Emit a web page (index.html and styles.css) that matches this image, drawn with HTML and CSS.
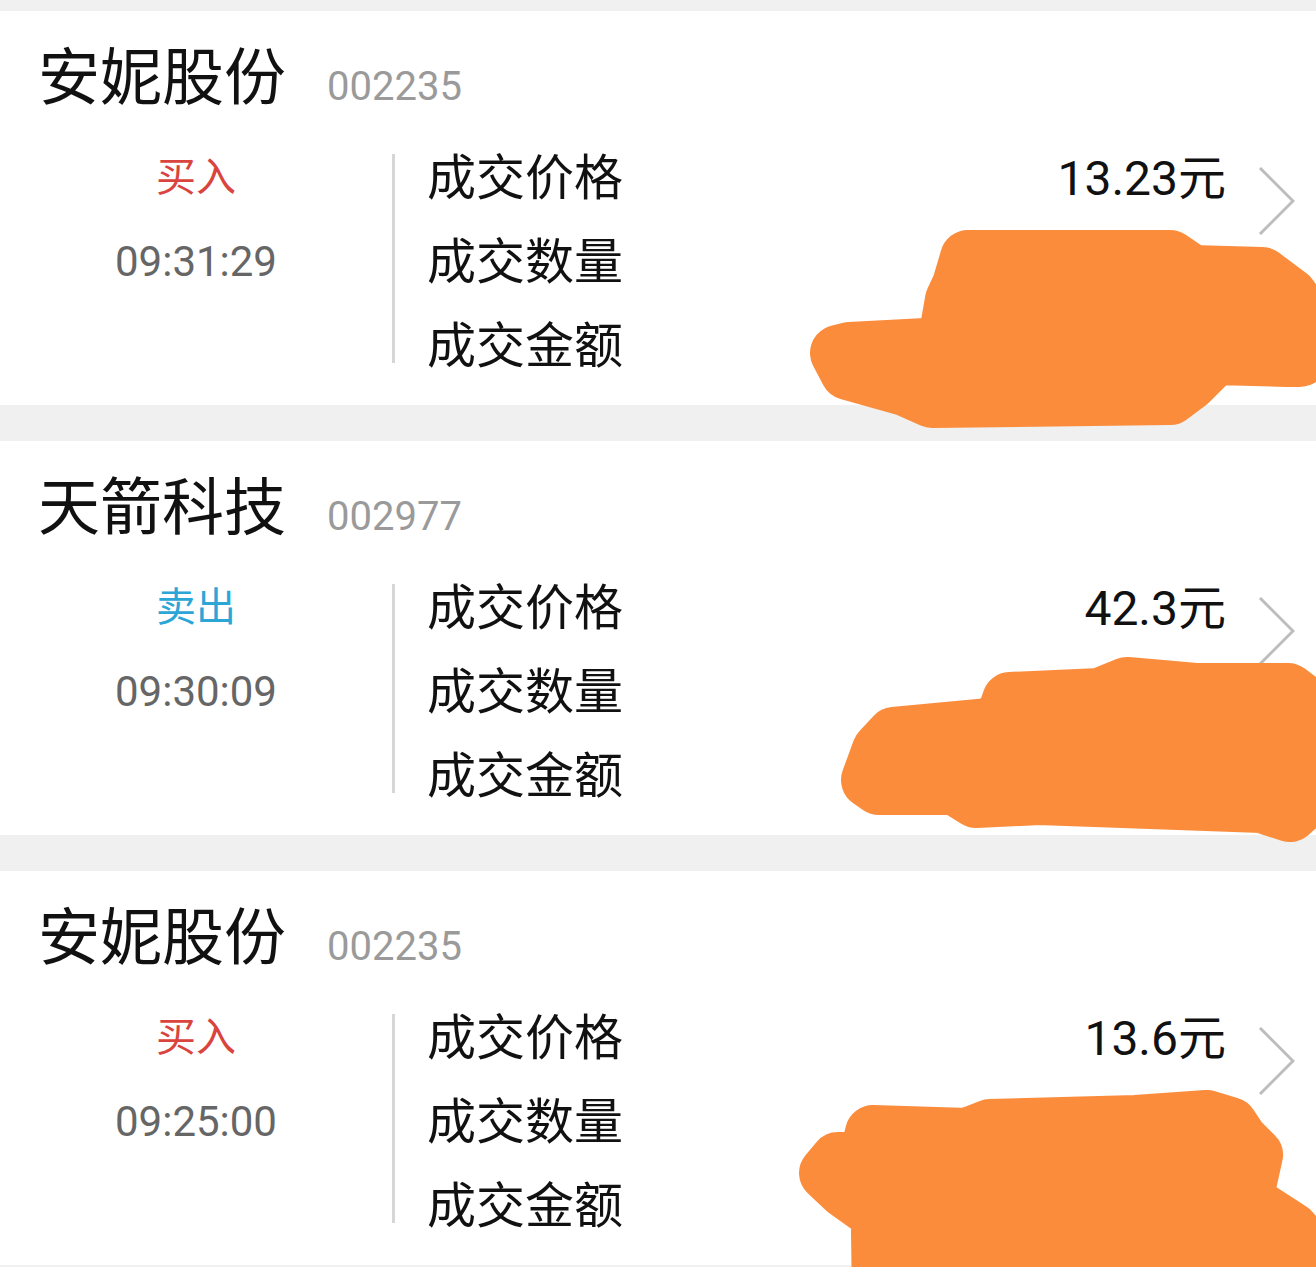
FILE: index.html
```html
<!DOCTYPE html>
<html lang="zh-CN">
<head>
    <meta charset="UTF-8">
    <meta name="viewport" content="width=device-width, initial-scale=1.0">
    <title>成交记录</title>
    <link rel="stylesheet" href="styles.css">
</head>
<body>
    <div class="list">
        <div class="deal">
            <div class="deal-head">
                <span class="stock-name">安妮股份</span>
                <span class="stock-code">002235</span>
            </div>
            <div class="deal-body">
                <div class="deal-side">
                    <div class="dir buy">买入</div>
                    <div class="time">09:31:29</div>
                </div>
                <div class="divider"></div>
                <div class="deal-rows">
                    <div class="row"><span class="label">成交价格</span><span class="value">13.23元</span></div>
                    <div class="row"><span class="label">成交数量</span><span class="value"></span></div>
                    <div class="row"><span class="label">成交金额</span><span class="value"></span></div>
                </div>
                <div class="arrow">
                    <svg width="37" height="68" viewBox="0 0 37 68"><polyline points="2,1 35,34 2,67" fill="none" stroke="#bdbdbd" stroke-width="3"/></svg>
                </div>
            </div>
        </div>

        <div class="deal">
            <div class="deal-head">
                <span class="stock-name">天箭科技</span>
                <span class="stock-code">002977</span>
            </div>
            <div class="deal-body">
                <div class="deal-side">
                    <div class="dir sell">卖出</div>
                    <div class="time">09:30:09</div>
                </div>
                <div class="divider"></div>
                <div class="deal-rows">
                    <div class="row"><span class="label">成交价格</span><span class="value">42.3元</span></div>
                    <div class="row"><span class="label">成交数量</span><span class="value"></span></div>
                    <div class="row"><span class="label">成交金额</span><span class="value"></span></div>
                </div>
                <div class="arrow">
                    <svg width="37" height="68" viewBox="0 0 37 68"><polyline points="2,1 35,34 2,67" fill="none" stroke="#bdbdbd" stroke-width="3"/></svg>
                </div>
            </div>
        </div>

        <div class="deal">
            <div class="deal-head">
                <span class="stock-name">安妮股份</span>
                <span class="stock-code">002235</span>
            </div>
            <div class="deal-body">
                <div class="deal-side">
                    <div class="dir buy">买入</div>
                    <div class="time">09:25:00</div>
                </div>
                <div class="divider"></div>
                <div class="deal-rows">
                    <div class="row"><span class="label">成交价格</span><span class="value">13.6元</span></div>
                    <div class="row"><span class="label">成交数量</span><span class="value"></span></div>
                    <div class="row"><span class="label">成交金额</span><span class="value"></span></div>
                </div>
                <div class="arrow">
                    <svg width="37" height="68" viewBox="0 0 37 68"><polyline points="2,1 35,34 2,67" fill="none" stroke="#bdbdbd" stroke-width="3"/></svg>
                </div>
            </div>
        </div>
    </div>

    <!-- 涂抹遮挡 -->
    <svg class="scribble" width="1316" height="1267" viewBox="0 0 1316 1267">
        <g fill="#fb8c3c" stroke="#fb8c3c" stroke-width="56" stroke-linejoin="round">
            <polygon points="968,258 1170,258 1192,273 1262,275 1290,296 1300,310 1300,359 1287,359 1215,357 1190,382 1170,397 932,400 905,388 848,372 838,353 850,350 945,345 953,300 960,285"/>
            <polygon points="1010,700 1100,696 1127,685 1195,691 1288,691 1300,700 1300,760 1292,775 1300,805 1290,814 1262,805 1039,797 976,800 955,787 879,787 869,780 880,750 894,735 990,726 1005,715"/>
            <polygon points="873,1133 967,1136 990,1127 1136,1123 1207,1118 1230,1125 1240,1140 1255,1155 1245,1200 1291,1230 1300,1240 1300,1300 880,1300 879,1232 880,1215 845,1190 827,1173 838,1160 860,1160 870,1145"/>
        </g>
    </svg>
</body>
</html>
```

FILE: styles.css
```css
body{
    margin: 0;
    position: relative;
    min-height: 1267px;
    background-color: #f0f0f0;
    font-family: Roboto, "Noto Sans CJK SC", sans-serif;
    color: #111;
}

.list{
    display: flex;
    flex-direction: column;
    gap: 36px;
    padding-top: 11px;
}

.deal{
    height: 394px;
    box-sizing: border-box;
    padding-top: 31px;
    background-color: #fff;
}

.deal-head{
    display: flex;
    align-items: baseline;
    height: 64px;
    padding-left: 38px;
}
.stock-name{
    font-family: "Noto Sans CJK SC", sans-serif;
    font-size: 62px;
    line-height: 62px;
}
.stock-code{
    margin-left: 41px;
    font-size: 40px;
    line-height: 40px;
    color: #9a9a9a;
}

.deal-body{
    display: flex;
    margin-top: 26px;
}
.deal-side{
    width: 392px;
    text-align: center;
}
.dir{
    font-family: "Noto Sans CJK SC", sans-serif;
    font-size: 40px;
    line-height: 84px;
}
.buy{
    color: #d9443e;
}
.sell{
    color: #2ca6d6;
}
.time{
    font-size: 42px;
    line-height: 92px;
    color: #666;
}

.divider{
    width: 3px;
    height: 209px;
    margin-top: 22px;
    background-color: #d6d6d6;
}

.deal-rows{
    flex: 1;
    padding-left: 32px;
}
.row{
    display: flex;
    justify-content: space-between;
    align-items: baseline;
    height: 84px;
}
.label{
    font-family: "Noto Sans CJK SC", sans-serif;
    font-size: 49px;
    line-height: 84px;
}
.value{
    font-size: 48px;
    line-height: 84px;
}

.arrow{
    width: 37px;
    margin: 35px 21px 0 32px;
}
.arrow svg{
    display: block;
}

.scribble{
    position: absolute;
    top: 0;
    left: 0;
    pointer-events: none;
}
```
